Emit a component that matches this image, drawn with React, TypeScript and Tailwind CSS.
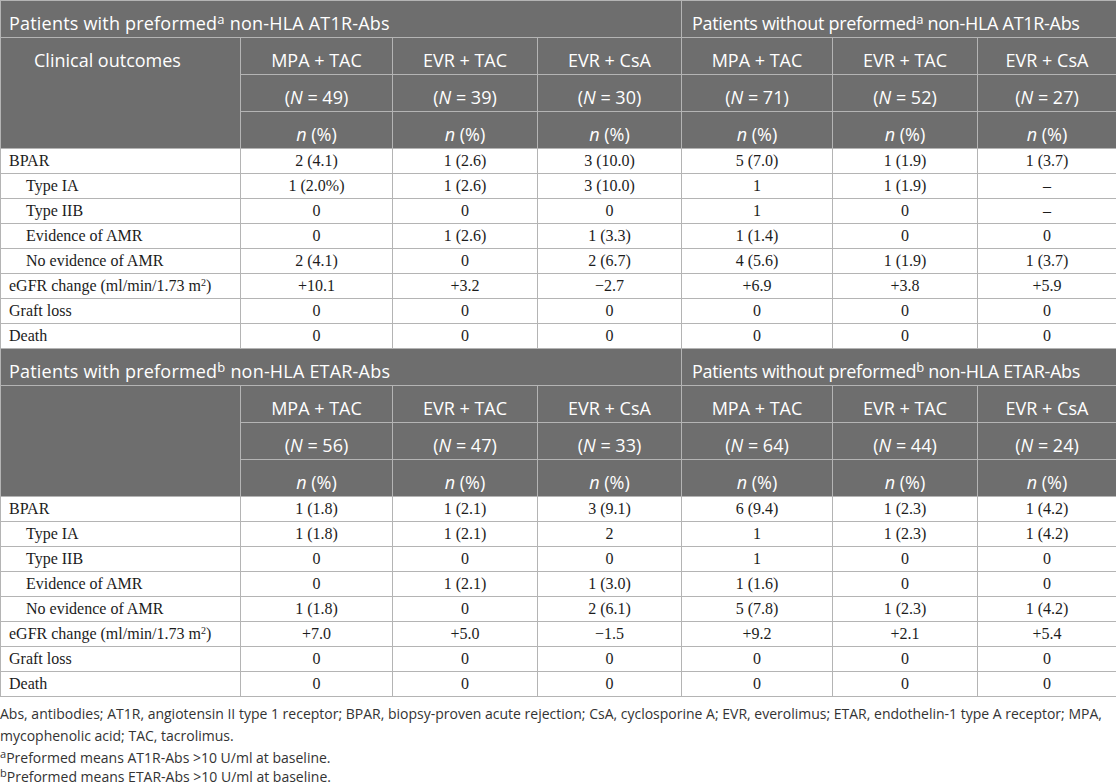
import React from 'react';

type Section = {
    mark: string;
    ab: string;
    ns: string[];
    rows: { label: string; indent?: boolean; sup?: boolean; vals: string[] }[];
    showLabel: boolean;
};

const groups = ['MPA + TAC', 'EVR + TAC', 'EVR + CsA', 'MPA + TAC', 'EVR + TAC', 'EVR + CsA'];

const sections: Section[] = [
    {
        mark: 'a',
        ab: 'AT1R-Abs',
        ns: ['49', '39', '30', '71', '52', '27'],
        showLabel: true,
        rows: [
            { label: 'BPAR', vals: ['2 (4.1)', '1 (2.6)', '3 (10.0)', '5 (7.0)', '1 (1.9)', '1 (3.7)'] },
            { label: 'Type IA', indent: true, vals: ['1 (2.0%)', '1 (2.6)', '3 (10.0)', '1', '1 (1.9)', '–'] },
            { label: 'Type IIB', indent: true, vals: ['0', '0', '0', '1', '0', '–'] },
            { label: 'Evidence of AMR', indent: true, vals: ['0', '1 (2.6)', '1 (3.3)', '1 (1.4)', '0', '0'] },
            { label: 'No evidence of AMR', indent: true, vals: ['2 (4.1)', '0', '2 (6.7)', '4 (5.6)', '1 (1.9)', '1 (3.7)'] },
            { label: 'eGFR change (ml/min/1.73 m', sup: true, vals: ['+10.1', '+3.2', '−2.7', '+6.9', '+3.8', '+5.9'] },
            { label: 'Graft loss', vals: ['0', '0', '0', '0', '0', '0'] },
            { label: 'Death', vals: ['0', '0', '0', '0', '0', '0'] },
        ],
    },
    {
        mark: 'b',
        ab: 'ETAR-Abs',
        ns: ['56', '47', '33', '64', '44', '24'],
        showLabel: false,
        rows: [
            { label: 'BPAR', vals: ['1 (1.8)', '1 (2.1)', '3 (9.1)', '6 (9.4)', '1 (2.3)', '1 (4.2)'] },
            { label: 'Type IA', indent: true, vals: ['1 (1.8)', '1 (2.1)', '2', '1', '1 (2.3)', '1 (4.2)'] },
            { label: 'Type IIB', indent: true, vals: ['0', '0', '0', '1', '0', '0'] },
            { label: 'Evidence of AMR', indent: true, vals: ['0', '1 (2.1)', '1 (3.0)', '1 (1.6)', '0', '0'] },
            { label: 'No evidence of AMR', indent: true, vals: ['1 (1.8)', '0', '2 (6.1)', '5 (7.8)', '1 (2.3)', '1 (4.2)'] },
            { label: 'eGFR change (ml/min/1.73 m', sup: true, vals: ['+7.0', '+5.0', '−1.5', '+9.2', '+2.1', '+5.4'] },
            { label: 'Graft loss', vals: ['0', '0', '0', '0', '0', '0'] },
            { label: 'Death', vals: ['0', '0', '0', '0', '0', '0'] },
        ],
    },
];

const head = 'bg-[#6e6e6e] text-white border border-[#b4b4b4] h-[37px] align-top pt-[10px] pb-0 leading-[25px] font-normal';
const body = 'border border-[#b4b4b4] h-[25px] py-0 leading-[24px] text-[#1c1c1c]';

function SectionRows({ s }: { s: Section }) {
    return (
        <>
            <tr>
                <th colSpan={4} className={`${head} text-left pl-[8px] tracking-[0.2px]`}>
                    Patients with preformed<sup className="text-[13px] leading-none">{s.mark}</sup> non-HLA {s.ab}
                </th>
                <th colSpan={3} className={`${head} text-left pl-[10px] tracking-[-0.3px]`}>
                    Patients without preformed<sup className="text-[13px] leading-none">{s.mark}</sup> non-HLA {s.ab}
                </th>
            </tr>
            <tr>
                <th rowSpan={3} className={`${head} text-left pl-[33px]`}>
                    {s.showLabel ? 'Clinical outcomes' : ''}
                </th>
                {groups.map((g, i) => (
                    <th key={i} className={`${head} text-center`}>{g}</th>
                ))}
            </tr>
            <tr>
                {s.ns.map((n, i) => (
                    <th key={i} className={`${head} text-center`}>
                        (<i>N</i> = {n})
                    </th>
                ))}
            </tr>
            <tr>
                {s.ns.map((_, i) => (
                    <th key={i} className={`${head} text-center`}>
                        <i>n</i> (%)
                    </th>
                ))}
            </tr>
            {s.rows.map((r, ri) => (
                <tr key={ri} className="font-['Liberation_Serif',serif] text-[16px]">
                    <td className={`${body} ${r.indent ? 'pl-[25px]' : 'pl-[8px]'} text-left`}>
                        {r.label}
                        {r.sup && (
                            <>
                                <sup className="text-[10px] leading-none">2</sup>)
                            </>
                        )}
                    </td>
                    {r.vals.map((v, vi) => (
                        <td key={vi} className={`${body} text-center`}>{v}</td>
                    ))}
                </tr>
            ))}
        </>
    );
}

export default function App() {
    return (
        <div className="w-[1116px] bg-white font-['Open_Sans',sans-serif]">
            <table className="w-[1116px] border-collapse table-fixed text-[18px]">
                <colgroup>
                    <col className="w-[240px]" />
                    <col className="w-[152px]" />
                    <col className="w-[145px]" />
                    <col className="w-[144px]" />
                    <col className="w-[151px]" />
                    <col className="w-[145px]" />
                    <col className="w-[139px]" />
                </colgroup>
                <tbody>
                    {sections.map((s, i) => (
                        <SectionRows key={i} s={s} />
                    ))}
                </tbody>
            </table>

            {/* Footnotes */}
            <div className="pt-[6px] text-[14px] leading-[22px] text-[#333]">
                <p>
                    Abs, antibodies; AT1R, angiotensin II type 1 receptor; BPAR, biopsy-proven acute rejection; CsA, cyclosporine A; EVR, everolimus; ETAR, endothelin-1 type A receptor; MPA, mycophenolic acid; TAC, tacrolimus.
                </p>
                <p>
                    <sup className="text-[11px] leading-none">a</sup>Preformed means AT1R-Abs &gt;10 U/ml at baseline.
                </p>
                <p className="leading-[16px]">
                    <sup className="text-[11px] leading-none">b</sup>Preformed means ETAR-Abs &gt;10 U/ml at baseline.
                </p>
            </div>
        </div>
    );
}
